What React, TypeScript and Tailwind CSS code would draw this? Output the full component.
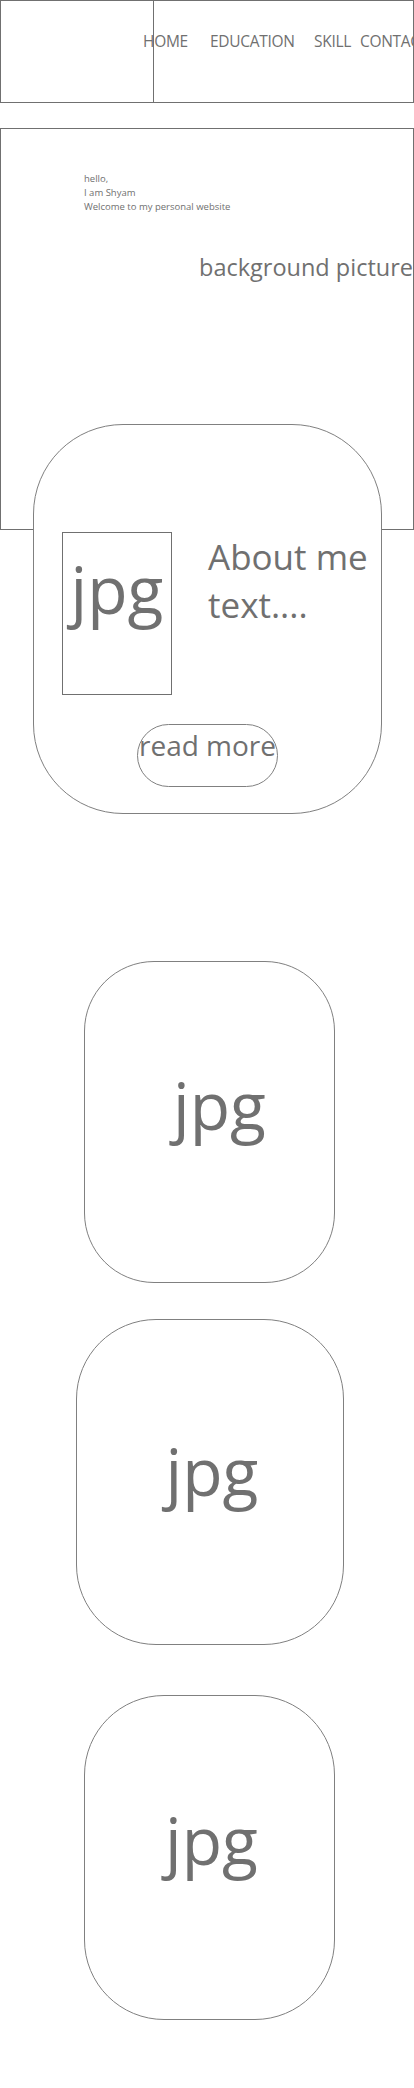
export default function App() {
  const font = { fontFamily: '"Segoe UI", "Open Sans", "Noto Sans", sans-serif' };
  return (
    <div className="w-[414px] overflow-hidden bg-white text-[#707070]" style={font}>
      {/* header */}
      <header className="flex h-[103px] w-[414px] border border-[#707070]">
        <div className="h-full w-[153px] shrink-0 border-r border-[#707070]" />
        <nav className="-ml-[11px] flex items-start whitespace-nowrap pt-[28px] text-[15.5px] leading-[24px] tracking-[-0.3px]">
          <a className="w-[67px] shrink-0">HOME</a>
          <a className="w-[104px] shrink-0">EDUCATION</a>
          <a className="w-[46px] shrink-0">SKILL</a>
          <a className="shrink-0">CONTACT</a>
        </nav>
      </header>

      {/* hero */}
      <section className="mt-[25px] h-[402px] w-[414px] border border-[#707070]">
        <div className="ml-[83px] mt-[43px] text-[9.5px] leading-[14px]">
          <p>hello,</p>
          <p>I am Shyam</p>
          <p>Welcome to my personal website</p>
        </div>
        <p className="ml-[198px] mt-[37px] whitespace-nowrap text-[23.5px] leading-[32px]">background picture</p>
      </section>

      {/* about card */}
      <section className="relative z-10 -mt-[106px] ml-[33px] h-[390px] w-[349px] rounded-[90px] border border-[#808080] bg-white">
        <div className="flex pl-[28px] pt-[107px]">
          <div className="flex h-[163px] w-[110px] shrink-0 justify-center border border-[#707070]">
            <span className="mt-[15px] text-[66px] leading-[80px]">jpg</span>
          </div>
          <p className="ml-[36px] mt-[1px] text-[35px] leading-[48px]">
            About me
            <br />
            text....
          </p>
        </div>
        <div className="ml-[103px] mt-[29px] flex h-[63px] w-[141px] justify-center rounded-full border border-[#808080]">
          <span className="whitespace-nowrap text-[28px] leading-[40px]">read more</span>
        </div>
      </section>

      {/* picture cards */}
      <div className="ml-[84px] mt-[147px] flex h-[322px] w-[251px] items-center justify-center rounded-[70px] border border-[#808080]">
        <span className="translate-x-[10px] -translate-y-[18px] text-[66px] leading-[80px]">jpg</span>
      </div>
      <div className="ml-[76px] mt-[36px] flex h-[326px] w-[268px] items-center justify-center rounded-[80px] border border-[#808080]">
        <span className="translate-x-[2px] -translate-y-[12px] text-[66px] leading-[80px]">jpg</span>
      </div>
      <div className="ml-[84px] mt-[50px] flex h-[325px] w-[251px] items-center justify-center rounded-[80px] border border-[#808080]">
        <span className="translate-x-[2px] -translate-y-[19px] text-[66px] leading-[80px]">jpg</span>
      </div>
      <div className="h-[68px]" />
    </div>
  );
}
